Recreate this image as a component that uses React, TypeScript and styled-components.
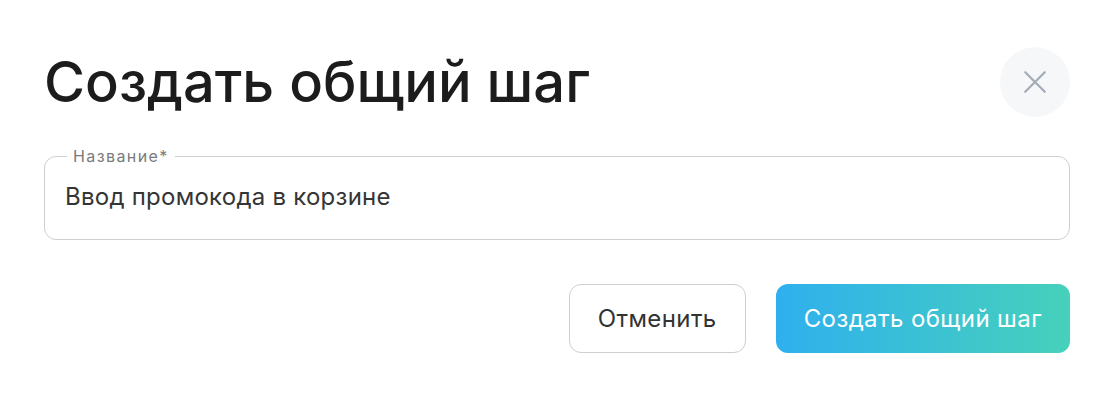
import React from "react";
import styled, { createGlobalStyle } from "styled-components";

const GlobalStyle = createGlobalStyle`
  html, body {
    margin: 0;
    padding: 0;
    background: #fff;
  }
  body {
    font-family: Inter, "Noto Sans", sans-serif;
  }
  * {
    box-sizing: border-box;
  }
`;

const App: React.FC = () => {
  return (
    <>
      <GlobalStyle />
      <Modal>
        <Header>
          <Title>Создать общий шаг</Title>
          <CloseButton aria-label="Закрыть">
            <svg width="26" height="26" viewBox="0 0 24 24" fill="none">
              <path
                d="M3 3L21 21M21 3L3 21"
                stroke="#a3abb6"
                strokeWidth="2"
                strokeLinecap="round"
              />
            </svg>
          </CloseButton>
        </Header>

        <Field>
          <Legend>Название*</Legend>
          <Input defaultValue="Ввод промокода в корзине" />
        </Field>

        <Actions>
          <Button>Отменить</Button>
          <Button $primary>Создать общий шаг</Button>
        </Actions>
      </Modal>
    </>
  );
};

export default App;

const Modal = styled.div`
  width: 1114px;
  height: 400px;
  padding: 47px 44px 0 44px;
  display: flex;
  flex-direction: column;
`;

const Header = styled.div`
  display: flex;
  justify-content: space-between;
  align-items: center;
  height: 70px;
`;

const Title = styled.h1`
  margin: 0;
  font-size: 56px;
  font-weight: 500;
  color: #1c1c1c;
  line-height: 1;
`;

const CloseButton = styled.button`
  width: 70px;
  height: 70px;
  border: none;
  border-radius: 50%;
  background: #f5f7f9;
  display: flex;
  align-items: center;
  justify-content: center;
  padding: 0;
  cursor: pointer;
`;

const Field = styled.fieldset`
  margin: 33px 0 0 0;
  padding: 0 20px;
  height: 90px;
  border: 1px solid #cfcfcf;
  border-radius: 12px;
`;

const Legend = styled.legend`
  padding: 0 6px;
  margin-left: 2px;
  font-size: 16px;
  letter-spacing: 1.4px;
  color: #7a7a7a;
  line-height: 12px;
`;

const Input = styled.input`
  display: block;
  width: 100%;
  margin-top: 20px;
  border: none;
  outline: none;
  padding: 0;
  font-family: Inter, "Noto Sans", sans-serif;
  font-size: 24px;
  letter-spacing: 0.25px;
  line-height: 30px;
  color: #353535;
  background: transparent;
`;

const Actions = styled.div`
  display: flex;
  justify-content: flex-end;
  gap: 30px;
  margin-top: 44px;
`;

const Button = styled.button<{ $primary?: boolean }>`
  height: 69px;
  padding: 0 28px;
  border-radius: 12px;
  font-family: Inter, "Noto Sans", sans-serif;
  font-size: 24px;
  letter-spacing: 0.4px;
  cursor: pointer;
  border: ${(p) => (p.$primary ? "none" : "1px solid #cfcfcf")};
  background: ${(p) =>
    p.$primary ? "linear-gradient(90deg, #2fb0ee 0%, #46d1bb 100%)" : "#fff"};
  color: ${(p) => (p.$primary ? "#fff" : "#333")};
`;
